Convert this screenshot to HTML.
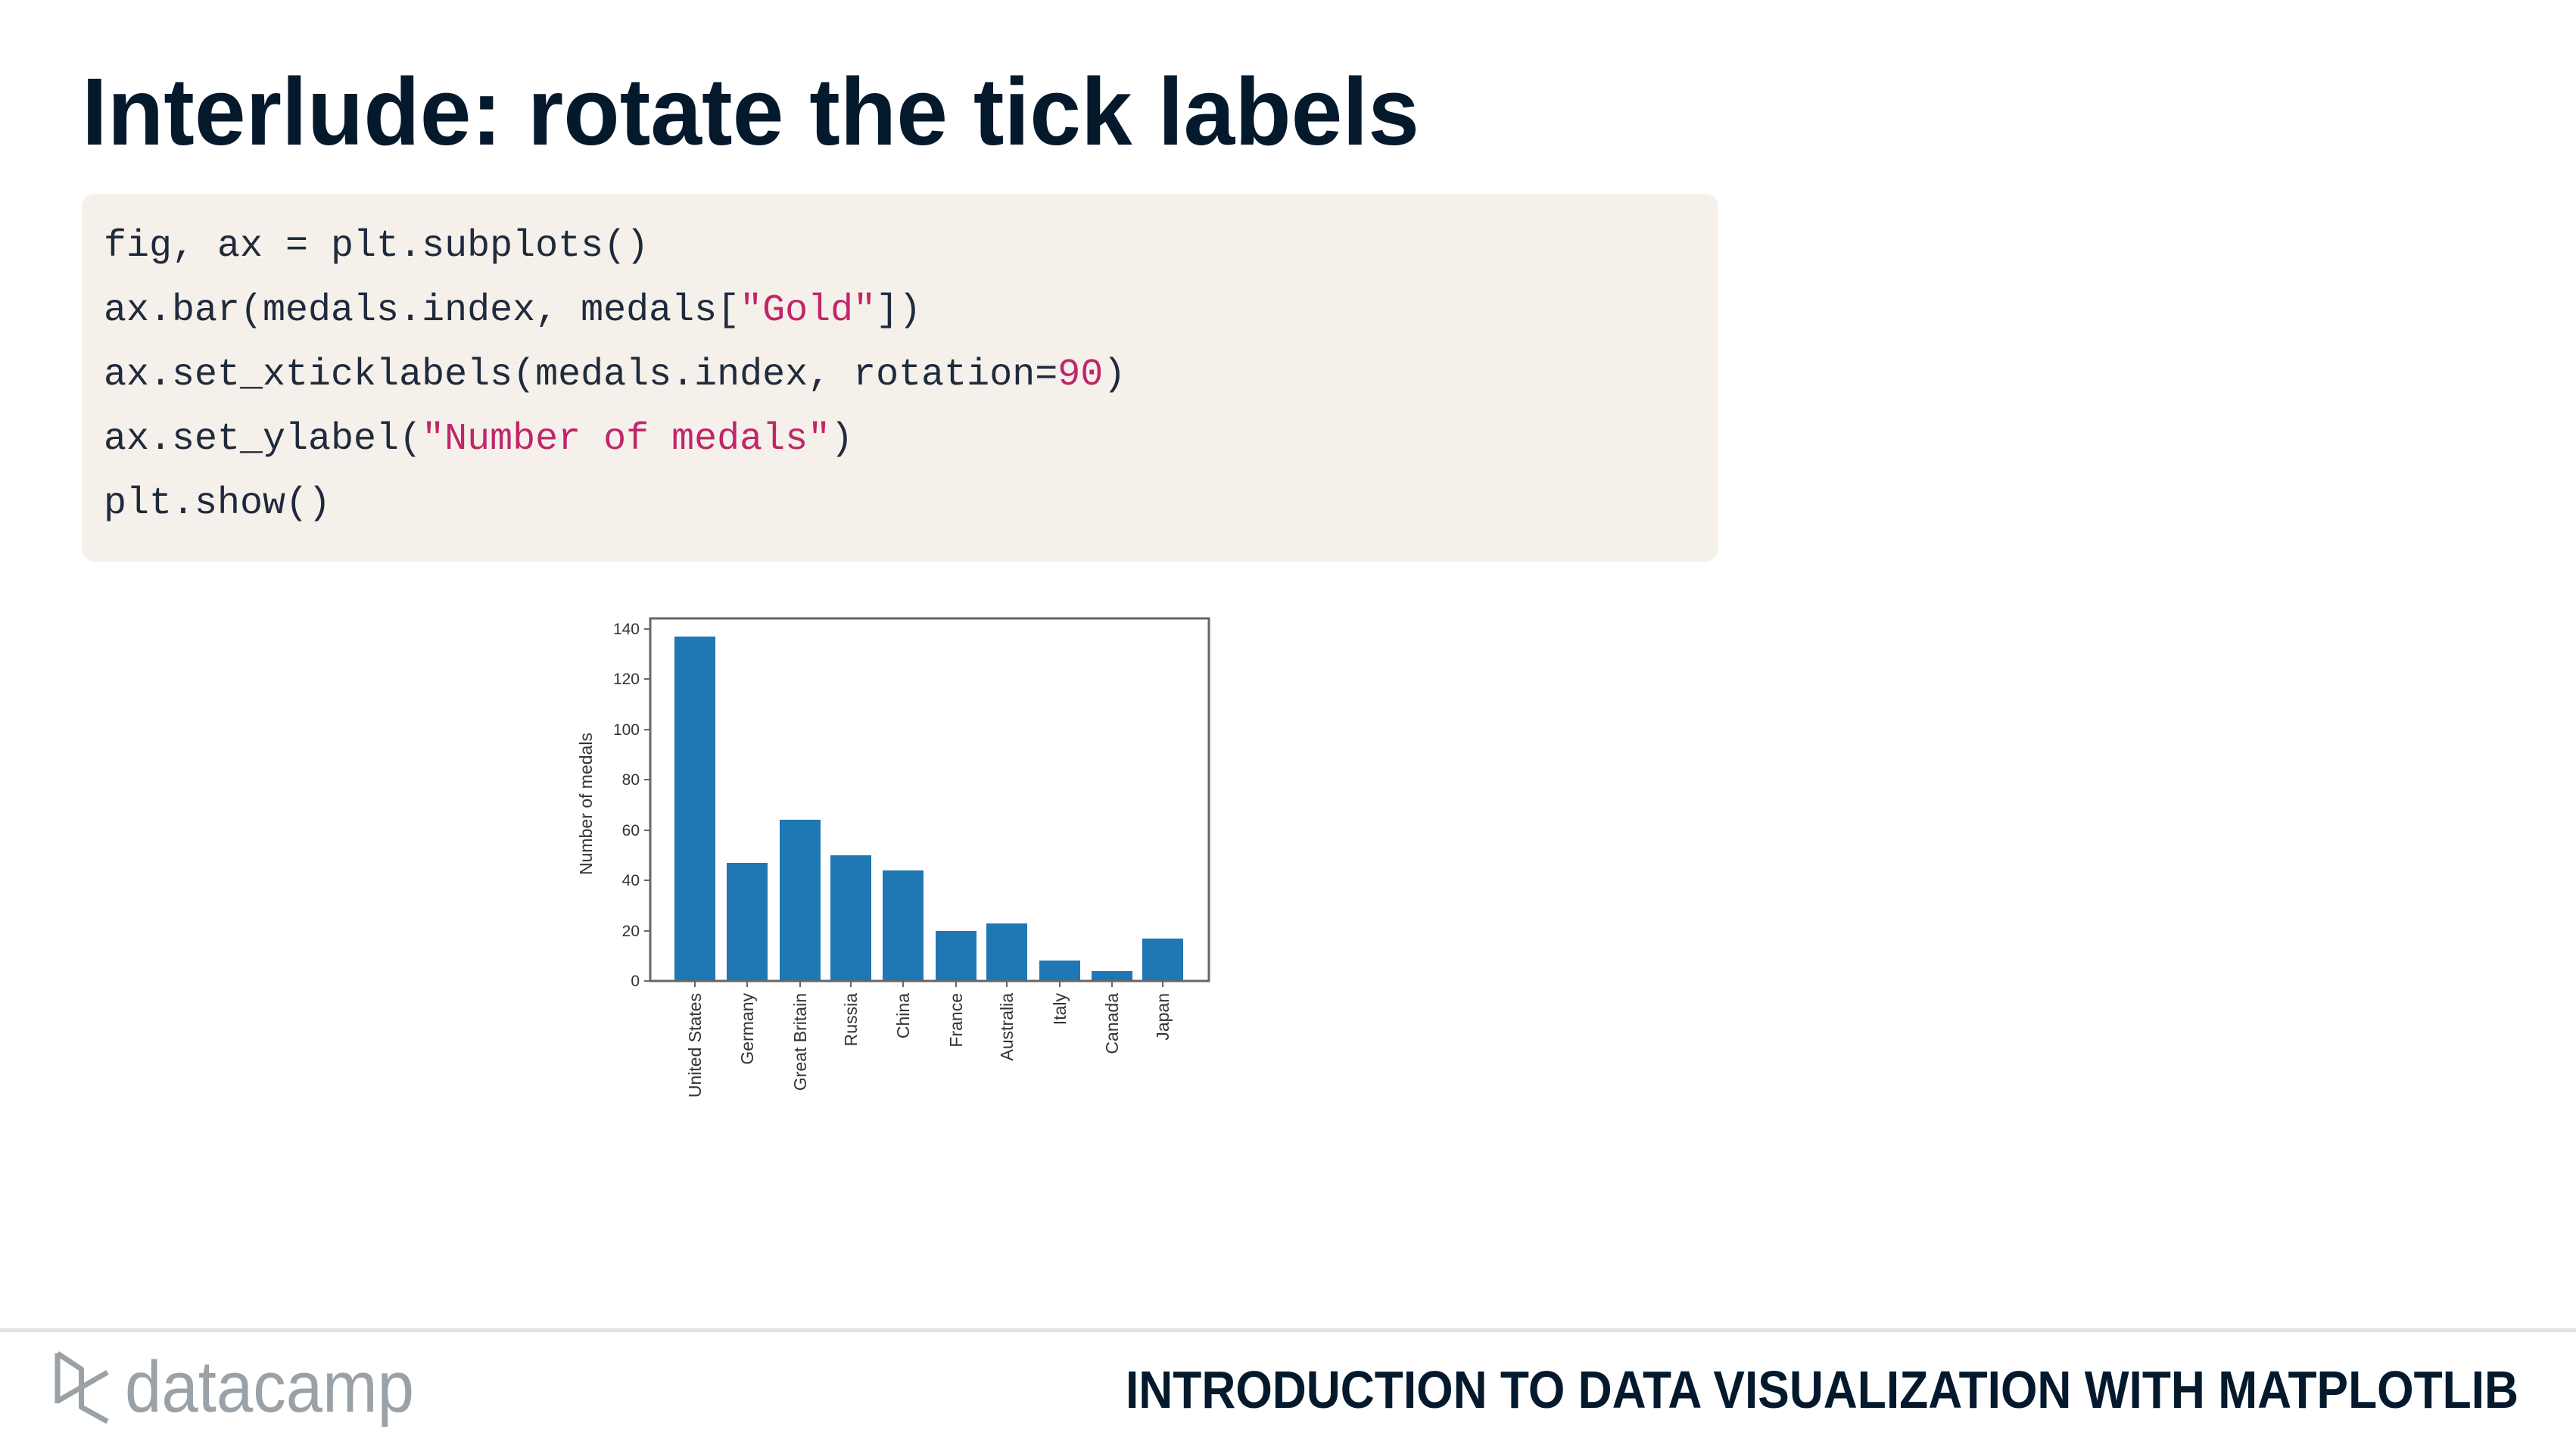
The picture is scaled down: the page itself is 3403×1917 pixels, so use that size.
<!DOCTYPE html>
<html><head><meta charset="utf-8"><style>
html,body{margin:0;padding:0;background:#fff;}
body{width:3403px;height:1917px;position:relative;overflow:hidden;font-family:"Liberation Sans",sans-serif;}
.code{position:absolute;left:108px;top:256px;width:2162px;height:486px;background:#f5f1ea;border-radius:17px;}
.code pre{margin:0;position:absolute;left:29px;top:27px;font-family:"Liberation Mono",monospace;font-size:50px;line-height:85px;color:#1f2a3c;}
.s{color:#c0266b;}
svg{position:absolute;left:0;top:0;}
</style></head><body>
<div class="code"><pre>fig, ax = plt.subplots()
ax.bar(medals.index, medals[<span class="s">"Gold"</span>])
ax.set_xticklabels(medals.index, rotation=<span class="s">90</span>)
ax.set_ylabel(<span class="s">"Number of medals"</span>)
plt.show()</pre></div>
<svg width="3403" height="1917" viewBox="0 0 3403 1917">
<text x="108" y="191" font-family="Liberation Sans" font-weight="bold" font-size="126" fill="#05192d" textLength="1767" lengthAdjust="spacingAndGlyphs">Interlude: rotate the tick labels</text>
<g fill="#1f77b4">
<rect x="891" y="841" width="54" height="455"/>
<rect x="960" y="1140" width="54" height="156"/>
<rect x="1030" y="1083" width="54" height="213"/>
<rect x="1097" y="1130" width="54" height="166"/>
<rect x="1166" y="1150" width="54" height="146"/>
<rect x="1236" y="1230" width="54" height="66"/>
<rect x="1303" y="1220" width="54" height="76"/>
<rect x="1373" y="1269" width="54" height="27"/>
<rect x="1442" y="1283" width="54" height="13"/>
<rect x="1509" y="1240" width="54" height="56"/>
</g>
<rect x="859" y="817" width="738" height="479" fill="none" stroke="#666" stroke-width="3"/>
<g stroke="#666" stroke-width="2">
<line x1="851" x2="859" y1="1296" y2="1296"/><line x1="851" x2="859" y1="1230" y2="1230"/><line x1="851" x2="859" y1="1163" y2="1163"/><line x1="851" x2="859" y1="1097" y2="1097"/><line x1="851" x2="859" y1="1030" y2="1030"/><line x1="851" x2="859" y1="964" y2="964"/><line x1="851" x2="859" y1="897" y2="897"/><line x1="851" x2="859" y1="831" y2="831"/>
<line y1="1296" y2="1304" x1="918" x2="918"/><line y1="1296" y2="1304" x1="987" x2="987"/><line y1="1296" y2="1304" x1="1057" x2="1057"/><line y1="1296" y2="1304" x1="1124" x2="1124"/><line y1="1296" y2="1304" x1="1193" x2="1193"/><line y1="1296" y2="1304" x1="1263" x2="1263"/><line y1="1296" y2="1304" x1="1330" x2="1330"/><line y1="1296" y2="1304" x1="1400" x2="1400"/><line y1="1296" y2="1304" x1="1469" x2="1469"/><line y1="1296" y2="1304" x1="1536" x2="1536"/>
</g>
<g font-family="Liberation Sans" font-size="21" fill="#333" text-anchor="end">
<text x="845" y="1303">0</text><text x="845" y="1237">20</text><text x="845" y="1170">40</text><text x="845" y="1104">60</text><text x="845" y="1037">80</text><text x="845" y="971">100</text><text x="845" y="904">120</text><text x="845" y="838">140</text>
</g>
<g font-family="Liberation Sans" font-size="23" fill="#333" text-anchor="end">
<text transform="translate(926,1312) rotate(-90)">United States</text>
<text transform="translate(995,1312) rotate(-90)">Germany</text>
<text transform="translate(1065,1312) rotate(-90)">Great Britain</text>
<text transform="translate(1132,1312) rotate(-90)">Russia</text>
<text transform="translate(1201,1312) rotate(-90)">China</text>
<text transform="translate(1271,1312) rotate(-90)">France</text>
<text transform="translate(1338,1312) rotate(-90)">Australia</text>
<text transform="translate(1408,1312) rotate(-90)">Italy</text>
<text transform="translate(1477,1312) rotate(-90)">Canada</text>
<text transform="translate(1544,1312) rotate(-90)">Japan</text>
</g>
<text transform="translate(782,1062) rotate(-90)" font-family="Liberation Sans" font-size="23" fill="#333" text-anchor="middle">Number of medals</text>
<rect x="0" y="1755" width="3403" height="5" fill="#e6e2dd"/>
<g fill="none" stroke="#9aa1a7" stroke-width="7" stroke-linejoin="round" stroke-linecap="butt">
<path d="M76,1788 L76,1854"/>
<path d="M76,1788 L107.5,1809 L107.5,1859 L142,1878"/>
<path d="M76,1851 L142,1813"/>
</g>
<text x="165" y="1865" font-family="Liberation Sans" font-size="96" fill="#9aa1a7" textLength="382" lengthAdjust="spacingAndGlyphs">datacamp</text>
<text x="1487" y="1860" font-family="Liberation Sans" font-weight="bold" font-size="70" fill="#05192d" textLength="1840" lengthAdjust="spacingAndGlyphs">INTRODUCTION TO DATA VISUALIZATION WITH MATPLOTLIB</text>
</svg>
</body></html>
